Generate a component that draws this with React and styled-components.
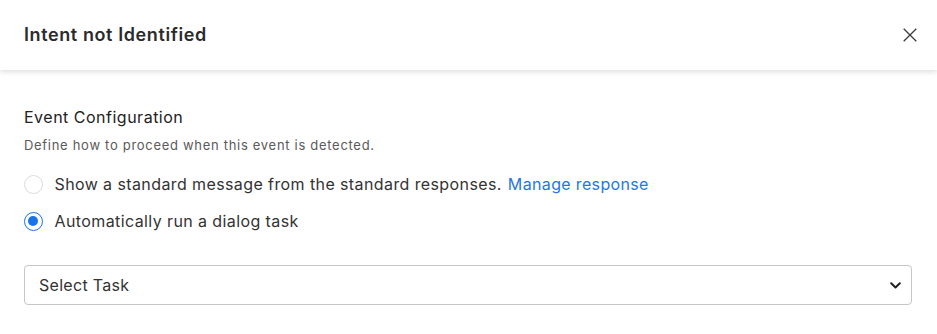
import React, { useState } from "react";
import styled, { createGlobalStyle } from "styled-components";

const Global = createGlobalStyle`
  html, body { margin: 0; padding: 0; background: #fff; }
  body { font-family: Inter, "Noto Sans", sans-serif; -webkit-font-smoothing: antialiased; }
  * { box-sizing: border-box; }
`;

const Panel = styled.div`
  width: 937px;
  height: 334px;
  background: #fff;
  overflow: hidden;
`;

const Header = styled.header`
  height: 70px;
  display: flex;
  align-items: center;
  justify-content: space-between;
  padding: 0 20px 0 24px;
  background: #fff;
  box-shadow: 0 2px 5px rgba(0, 0, 0, 0.13);
  position: relative;
  z-index: 1;
`;

const Title = styled.h2`
  margin: 0;
  font-size: 18px;
  line-height: 24px;
  font-weight: 600;
  letter-spacing: 0.6px;
  color: #2b2b2b;
`;

const CloseButton = styled.button`
  width: 14px;
  height: 14px;
  padding: 0;
  border: none;
  background: none;
  display: flex;
  cursor: pointer;
  color: #3a3a3a;
`;

const Body = styled.div`
  padding: 36px 25px 0 24px;
`;

const SectionTitle = styled.div`
  font-size: 16px;
  line-height: 22px;
  letter-spacing: 0.5px;
  color: #222;
`;

const Description = styled.div`
  margin-top: 8px;
  font-size: 13px;
  line-height: 18px;
  letter-spacing: 0.7px;
  color: #5a5a5a;
`;

const RadioGroup = styled.div`
  margin-top: 16px;
  display: flex;
  flex-direction: column;
  gap: 9px;
`;

const RadioRow = styled.label`
  display: flex;
  align-items: center;
  height: 28px;
  gap: 12px;
  font-size: 16px;
  letter-spacing: 0.4px;
  color: #333;
  cursor: pointer;
`;

const RadioCircle = styled.span`
  width: 19px;
  height: 19px;
  border-radius: 50%;
  border: ${(p) => (p.$checked ? "1.6px solid #1a73e8" : "1px solid #dcdcdc")};
  display: flex;
  align-items: center;
  justify-content: center;
  flex: none;
  margin-left: -0.5px;
  &::after {
    content: "";
    display: ${(p) => (p.$checked ? "block" : "none")};
    width: 10px;
    height: 10px;
    border-radius: 50%;
    background: #1a73e8;
  }
`;

const Link = styled.a`
  color: #1f77e6;
  text-decoration: none;
  margin-left: 6px;
  letter-spacing: 0.35px;
  cursor: pointer;
`;

const SelectBox = styled.div`
  margin-top: 30px;
  height: 40px;
  border: 1px solid #c6c6c6;
  border-radius: 4px;
  display: flex;
  align-items: center;
  justify-content: space-between;
  padding: 0 10px 0 14px;
  font-size: 16px;
  letter-spacing: 0.3px;
  color: #333;
  cursor: pointer;
`;

const Chevron = () => (
  <svg width="11" height="7" viewBox="0 0 11 7" fill="none">
    <path d="M1.2 1.2 L5.5 5.5 L9.8 1.2" stroke="#222" strokeWidth="2" strokeLinecap="round" strokeLinejoin="round" />
  </svg>
);

export default function App() {
  const [choice, setChoice] = useState("task");
  return (
    <>
      <Global />
      <Panel>
        <Header>
          <Title>Intent not Identified</Title>
          <CloseButton aria-label="Close">
            <svg width="14" height="14" viewBox="0 0 14 14" fill="none">
              <path d="M0.7 0.7 L13.3 13.3 M13.3 0.7 L0.7 13.3" stroke="currentColor" strokeWidth="1.3" />
            </svg>
          </CloseButton>
        </Header>
        <Body>
          <SectionTitle>Event Configuration</SectionTitle>
          <Description>Define how to proceed when this event is detected.</Description>
          <RadioGroup>
            <RadioRow onClick={() => setChoice("message")}>
              <RadioCircle $checked={choice === "message"} />
              <span>
                Show a standard message from the standard responses.
                <Link>Manage response</Link>
              </span>
            </RadioRow>
            <RadioRow onClick={() => setChoice("task")}>
              <RadioCircle $checked={choice === "task"} />
              <span>Automatically run a dialog task</span>
            </RadioRow>
          </RadioGroup>
          <SelectBox>
            <span>Select Task</span>
            <Chevron />
          </SelectBox>
        </Body>
      </Panel>
    </>
  );
}
